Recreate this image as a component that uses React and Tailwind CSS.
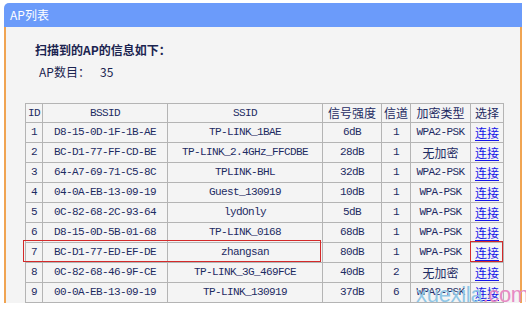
const rows = [
  ["1", "D8-15-0D-1F-1B-AE", "TP-LINK_1BAE", "6dB", "1", "WPA2-PSK"],
  ["2", "BC-D1-77-FF-CD-BE", "TP-LINK_2.4GHz_FFCDBE", "28dB", "1", "无加密"],
  ["3", "64-A7-69-71-C5-8C", "TPLINK-BHL", "32dB", "1", "WPA2-PSK"],
  ["4", "04-0A-EB-13-09-19", "Guest_130919", "10dB", "1", "WPA-PSK"],
  ["5", "0C-82-68-2C-93-64", "lydOnly", "5dB", "1", "WPA-PSK"],
  ["6", "D8-15-0D-5B-01-68", "TP-LINK_0168", "68dB", "1", "WPA-PSK"],
  ["7", "BC-D1-77-ED-EF-DE", "zhangsan", "80dB", "1", "WPA-PSK"],
  ["8", "0C-82-68-46-9F-CE", "TP-LINK_3G_469FCE", "40dB", "2", "无加密"],
  ["9", "00-0A-EB-13-09-19", "TP-LINK_130919", "37dB", "6", "WPA2-PSK"],
  ["10", "", "", "", "", ""],
];

const mono = "font-['Liberation_Mono','Noto_Sans_CJK_SC',monospace] text-[11px] tracking-[-0.6px]";
const cjk = "font-['Noto_Sans_CJK_SC',sans-serif] text-[12px]";

const cell = "border border-[#b4b4b4] p-0 text-center text-[#1d2b63] leading-none";

const App = () => {
  return (
    <div className="relative w-[526px] h-[309px] overflow-hidden bg-white">
      <div className="ml-[4px] mt-[3px] w-[518px]">
        {/* title bar */}
        <div className="h-[24px] rounded-tl-[5px] bg-[#6b9bfa] pl-[6px] flex items-center">
          <span className="font-['Noto_Sans_CJK_SC',sans-serif] text-[12px] text-white">AP列表</span>
        </div>

        {/* content */}
        <div className="h-[276px] overflow-hidden border-x-2 border-[#f0a452] bg-[#f4f4f4]">
          <div className="pt-[15px] pl-[29px] h-[31px] font-['Noto_Sans_CJK_SC',sans-serif] text-[12px] font-bold text-[#1b2450] leading-[16px]">
            扫描到的AP的信息如下：
          </div>
          <div className="mt-[6px] pl-[33px] flex h-[16px] items-center font-['Noto_Sans_CJK_SC',sans-serif] text-[12px] text-[#1b2450]">
            <span className="w-[61px]">AP数目：</span>
            <span>35</span>
          </div>

          <table className="mt-[23px] ml-[19px] border-collapse table-fixed w-[478px]">
            <colgroup>
              <col className="w-[17px]" />
              <col className="w-[125px]" />
              <col className="w-[155px]" />
              <col className="w-[59px]" />
              <col className="w-[29px]" />
              <col className="w-[60px]" />
              <col className="w-[33px]" />
            </colgroup>
            <thead>
              <tr className="h-[19px]">
                <th className={`${cell} ${mono} font-normal`}>ID</th>
                <th className={`${cell} ${mono} font-normal`}>BSSID</th>
                <th className={`${cell} ${mono} font-normal`}>SSID</th>
                <th className={`${cell} ${cjk} font-normal`}>信号强度</th>
                <th className={`${cell} ${cjk} font-normal`}>信道</th>
                <th className={`${cell} ${cjk} font-normal`}>加密类型</th>
                <th className={`${cell} ${cjk} font-normal`}>选择</th>
              </tr>
            </thead>
            <tbody>
              {rows.map((r) => (
                <tr key={r[0]} className="h-[20px]">
                  <td className={`${cell} ${mono}`}>{r[0]}</td>
                  <td className={`${cell} ${mono}`}>{r[1]}</td>
                  <td className={`${cell} ${mono}`}>{r[2]}</td>
                  <td className={`${cell} ${mono}`}>{r[3]}</td>
                  <td className={`${cell} ${mono}`}>{r[4]}</td>
                  <td className={`${cell} ${r[5] === "无加密" ? cjk : mono}`}>{r[5]}</td>
                  <td className={`${cell} ${cjk}`}>
                    {r[1] && (
                      <a href="#" className="text-[#1515e8] underline underline-offset-2">
                        连接
                      </a>
                    )}
                  </td>
                </tr>
              ))}
            </tbody>
          </table>
        </div>
      </div>

      {/* highlight boxes */}
      <div className="absolute left-[23px] top-[240px] w-[298px] h-[22px] border border-[#d42a2a]" />
      <div className="absolute left-[470px] top-[241px] w-[33px] h-[21px] border border-[#d42a2a]" />

      {/* watermark */}
      <div className="absolute left-[416px] top-[284px] font-['Liberation_Sans',sans-serif] text-[22px] leading-none tracking-[-0.3px]">
        <span className="text-[#8fc6e6]">xuexila</span>
        <span className="text-[#e78bc4]">.com</span>
      </div>
    </div>
  );
};

export default App;
